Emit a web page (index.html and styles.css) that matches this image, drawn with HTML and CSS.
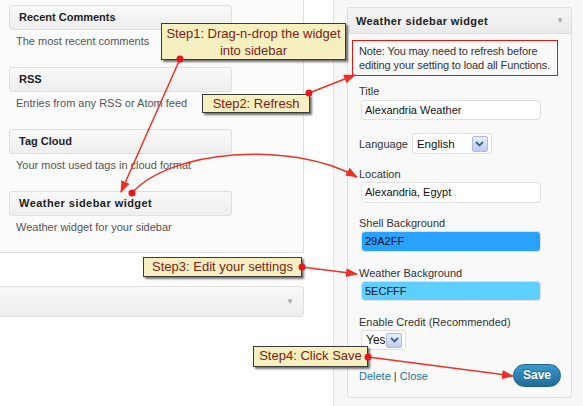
FILE: index.html
```html
<!DOCTYPE html>
<html>
<head>
<meta charset="utf-8">
<link rel="stylesheet" href="styles.css">
</head>
<body>
<div class="page">
  <div class="left">
    <div class="avail">
      <div class="witem">
        <div class="wtitle">Recent Comments</div>
        <div class="wdesc">The most recent comments</div>
      </div>
      <div class="witem">
        <div class="wtitle">RSS</div>
        <div class="wdesc">Entries from any RSS or Atom feed</div>
      </div>
      <div class="witem">
        <div class="wtitle">Tag Cloud</div>
        <div class="wdesc">Your most used tags in cloud format</div>
      </div>
      <div class="witem">
        <div class="wtitle wide">Weather sidebar widget</div>
        <div class="wdesc">Weather widget for your sidebar</div>
      </div>
    </div>
    <div class="inactive-bar"><span class="tri">&#9660;</span></div>
  </div>
  <div class="right">
    <div class="holder">
      <div class="panel">
        <div class="phead"><span class="ptitle">Weather sidebar widget</span><span class="tri">&#9660;</span></div>
        <div class="pbody">
          <div class="note">Note: You may need to refresh before<br>editing your setting to load all Functions.</div>
          <div class="lbl first">Title</div>
          <div class="inp">Alexandria Weather</div>
          <div class="langrow">
            <span>Language</span>
            <div class="sel sel-en"><span>English</span><span class="xpbtn"><svg width="9" height="6" viewBox="0 0 9 6"><path d="M1,1 L4.5,4.5 L8,1" fill="none" stroke="#4a5f86" stroke-width="1.8"/></svg></span></div>
          </div>
          <div class="lbl">Location</div>
          <div class="inp tall">Alexandria, Egypt</div>
          <div class="lbl">Shell Background</div>
          <div class="inp tall shell">29A2FF</div>
          <div class="lbl lbl14">Weather Background</div>
          <div class="inp wx">5ECFFF</div>
          <div class="lbl lbl14">Enable Credit (Recommended)</div>
          <div class="sel sel-yes"><span>Yes</span><span class="xpbtn"><svg width="9" height="6" viewBox="0 0 9 6"><path d="M1,1 L4.5,4.5 L8,1" fill="none" stroke="#4a5f86" stroke-width="1.8"/></svg></span></div>
          <div class="pfoot">
            <div class="links"><a class="lnk">Delete</a> | <a class="lnk">Close</a></div>
            <div class="save">Save</div>
          </div>
        </div>
      </div>
    </div>
  </div>
</div>

<div class="callout c1">Step1: Drag-n-drop the widget<br>into sidebar</div>
<div class="callout c2">Step2: Refresh</div>
<div class="callout c3">Step3: Edit your settings</div>
<div class="callout c4">Step4: Click Save</div>

<svg class="arrows" width="583" height="406" viewBox="0 0 583 406">
  <defs>
    <marker id="ah" viewBox="0 0 12 9" refX="11" refY="4.5" markerWidth="12" markerHeight="9" markerUnits="userSpaceOnUse" orient="auto">
      <path d="M0,0 L12,4.5 L0,9 z" fill="#ee3124"/>
    </marker>
  </defs>
  <g fill="none" stroke="#ee3124" stroke-width="1.5">
    <path d="M180,59 L121,192" marker-end="url(#ah)"/>
    <path d="M309,93 L355,75" marker-end="url(#ah)"/>
    <path d="M132,193 C170,150 290,140 357,177" marker-end="url(#ah)"/>
    <path d="M302,267 L357,274" marker-end="url(#ah)"/>
    <path d="M368,357 L513,376" marker-end="url(#ah)"/>
  </g>
  <g fill="#e8161b">
    <circle cx="180" cy="59" r="3.5"/>
    <circle cx="309" cy="93" r="3.5"/>
    <circle cx="132" cy="193" r="3.5"/>
    <circle cx="302" cy="267" r="3.5"/>
    <circle cx="368" cy="357" r="3.5"/>
  </g>
</svg>
</body>
</html>
```
FILE: styles.css
```css
html, body {
  margin: 0;
  padding: 0;
}
body {
  width: 583px;
  height: 406px;
  overflow: hidden;
  position: relative;
  background: #fff;
  font-family: "Liberation Sans", Arial, sans-serif;
  font-size: 11px;
  color: #333;
}
.page {
  display: flex;
  height: 406px;
}
.left {
  width: 304px;
  flex: none;
}
.avail {
  height: 253px;
  box-sizing: border-box;
  border-right: 1px solid #dfdfdf;
  border-bottom: 1px solid #dfdfdf;
  background: #fbfbfb;
  padding: 5px 0 0 9px;
}
.wtitle {
  width: 223px;
  height: 25px;
  box-sizing: border-box;
  border: 1px solid #dfdfdf;
  border-radius: 3px;
  background: linear-gradient(#f9f9f9, #eeeeee);
  padding-left: 9px;
  font-weight: bold;
  color: #222;
  line-height: 23px;
}
.wtitle.wide {
  letter-spacing: 0.45px;
}
.wdesc {
  height: 37px;
  box-sizing: border-box;
  padding: 4px 0 0 7px;
  line-height: 14px;
  color: #555;
}
.inactive-bar {
  margin-top: 33px;
  height: 31px;
  box-sizing: border-box;
  border: 1px solid #dfdfdf;
  border-left: none;
  border-radius: 0 3px 3px 0;
  background: linear-gradient(#f9f9f9, #ececec);
  display: flex;
  justify-content: flex-end;
  align-items: center;
  padding-right: 9px;
}
.tri {
  color: #a8a8a8;
  font-size: 8px;
}
.right {
  flex: 1;
  padding-left: 29px;
}
.holder {
  height: 406px;
  box-sizing: border-box;
  border-left: 1px solid #e3e3e3;
  background: #f7f7f7;
  padding: 7px 0 0 13px;
}
.panel {
  width: 225px;
  box-sizing: border-box;
  border: 1px solid #dfdfdf;
  border-radius: 3px;
  background: #f9f9f9;
}
.phead {
  height: 26px;
  box-sizing: border-box;
  border-bottom: 1px solid #dfdfdf;
  background: linear-gradient(#f5f5f5, #eaeaea);
  display: flex;
  justify-content: space-between;
  align-items: center;
  padding: 0 7px 0 8px;
}
.ptitle {
  font-weight: bold;
  color: #222;
  letter-spacing: 0.4px;
}
.pbody {
  padding: 6px 10px 10px 11px;
  line-height: 14px;
}
.note {
  margin-left: -7px;
  width: 206px;
  box-sizing: border-box;
  border: 1px solid #e8140c;
  padding: 3px 4px 3px 6px;
  line-height: 14px;
  color: #333;
  white-space: nowrap;
  letter-spacing: -0.12px;
}
.lbl {
  margin-top: 13px;
  height: 14px;
}
.lbl.first {
  margin-top: 8px;
}
.lbl.lbl14 {
  margin-top: 14px;
}
.inp {
  margin: 1px 0 0 2px;
  width: 180px;
  height: 20px;
  box-sizing: border-box;
  border: 1px solid #dfdfdf;
  border-radius: 4px;
  background: #fff;
  padding-left: 3px;
  line-height: 18px;
  color: #111;
}
.lbl.first + .inp {
  margin-top: 2px;
}
.inp.tall {
  height: 21px;
  line-height: 19px;
}
.inp.shell {
  background: #29a2ff;
}
.inp.wx {
  background: #5ecfff;
}
.langrow {
  margin-top: 13px;
  height: 21px;
  display: flex;
  align-items: center;
}
.sel {
  box-sizing: border-box;
  border: 1px solid #dfdfdf;
  border-radius: 3px;
  background: #fff;
  display: flex;
  align-items: center;
  justify-content: space-between;
  color: #111;
  font-size: 11.5px;
}
.sel-en {
  margin-left: 4px;
  width: 80px;
  height: 21px;
  padding: 0 3px 0 4px;
}
.sel-yes {
  margin: 1px 0 0 2px;
  width: 45px;
  height: 20px;
  padding: 0 3px 0 4px;
  font-size: 12px;
}
.xpbtn {
  width: 16px;
  height: 16px;
  flex: none;
  box-sizing: border-box;
  border: 1px solid #a9bde4;
  border-radius: 2px;
  background: linear-gradient(#e6eefc, #bccdf0);
  display: flex;
  align-items: center;
  justify-content: center;
}
.sel-yes .xpbtn {
  height: 15px;
}
.pfoot {
  margin-top: 14px;
  height: 23px;
  display: flex;
  align-items: center;
  justify-content: space-between;
}
.links {
  color: #333;
  padding-top: 1px;
}
.lnk {
  color: #21759b;
}
.save {
  width: 48px;
  height: 23px;
  box-sizing: border-box;
  border: 1px solid #1b5f87;
  border-radius: 12px;
  background: linear-gradient(#3c9ad0, #1f6b97);
  color: #fff;
  font-weight: bold;
  font-size: 12px;
  text-align: center;
  line-height: 21px;
  text-shadow: 0 -1px 0 rgba(0, 0, 0, 0.35);
}
.callout {
  position: absolute;
  box-sizing: border-box;
  border: 1px solid #3a3a3a;
  background: #f6f0c0;
  box-shadow: 2px 2px 2px rgba(0, 0, 0, 0.55);
  color: #80201a;
  font-size: 13px;
  line-height: 17px;
  text-align: center;
  white-space: nowrap;
}
.c1 {
  left: 161px;
  top: 23px;
  width: 185px;
  height: 37px;
  padding-top: 1px;
}
.c2 {
  left: 202px;
  top: 94px;
  width: 108px;
  height: 19px;
}
.c3 {
  left: 143px;
  top: 257px;
  width: 159px;
  height: 20px;
}
.c4 {
  left: 253px;
  top: 346px;
  width: 115px;
  height: 21px;
  line-height: 18px;
}
.arrows {
  position: absolute;
  left: 0;
  top: 0;
  pointer-events: none;
}
```
